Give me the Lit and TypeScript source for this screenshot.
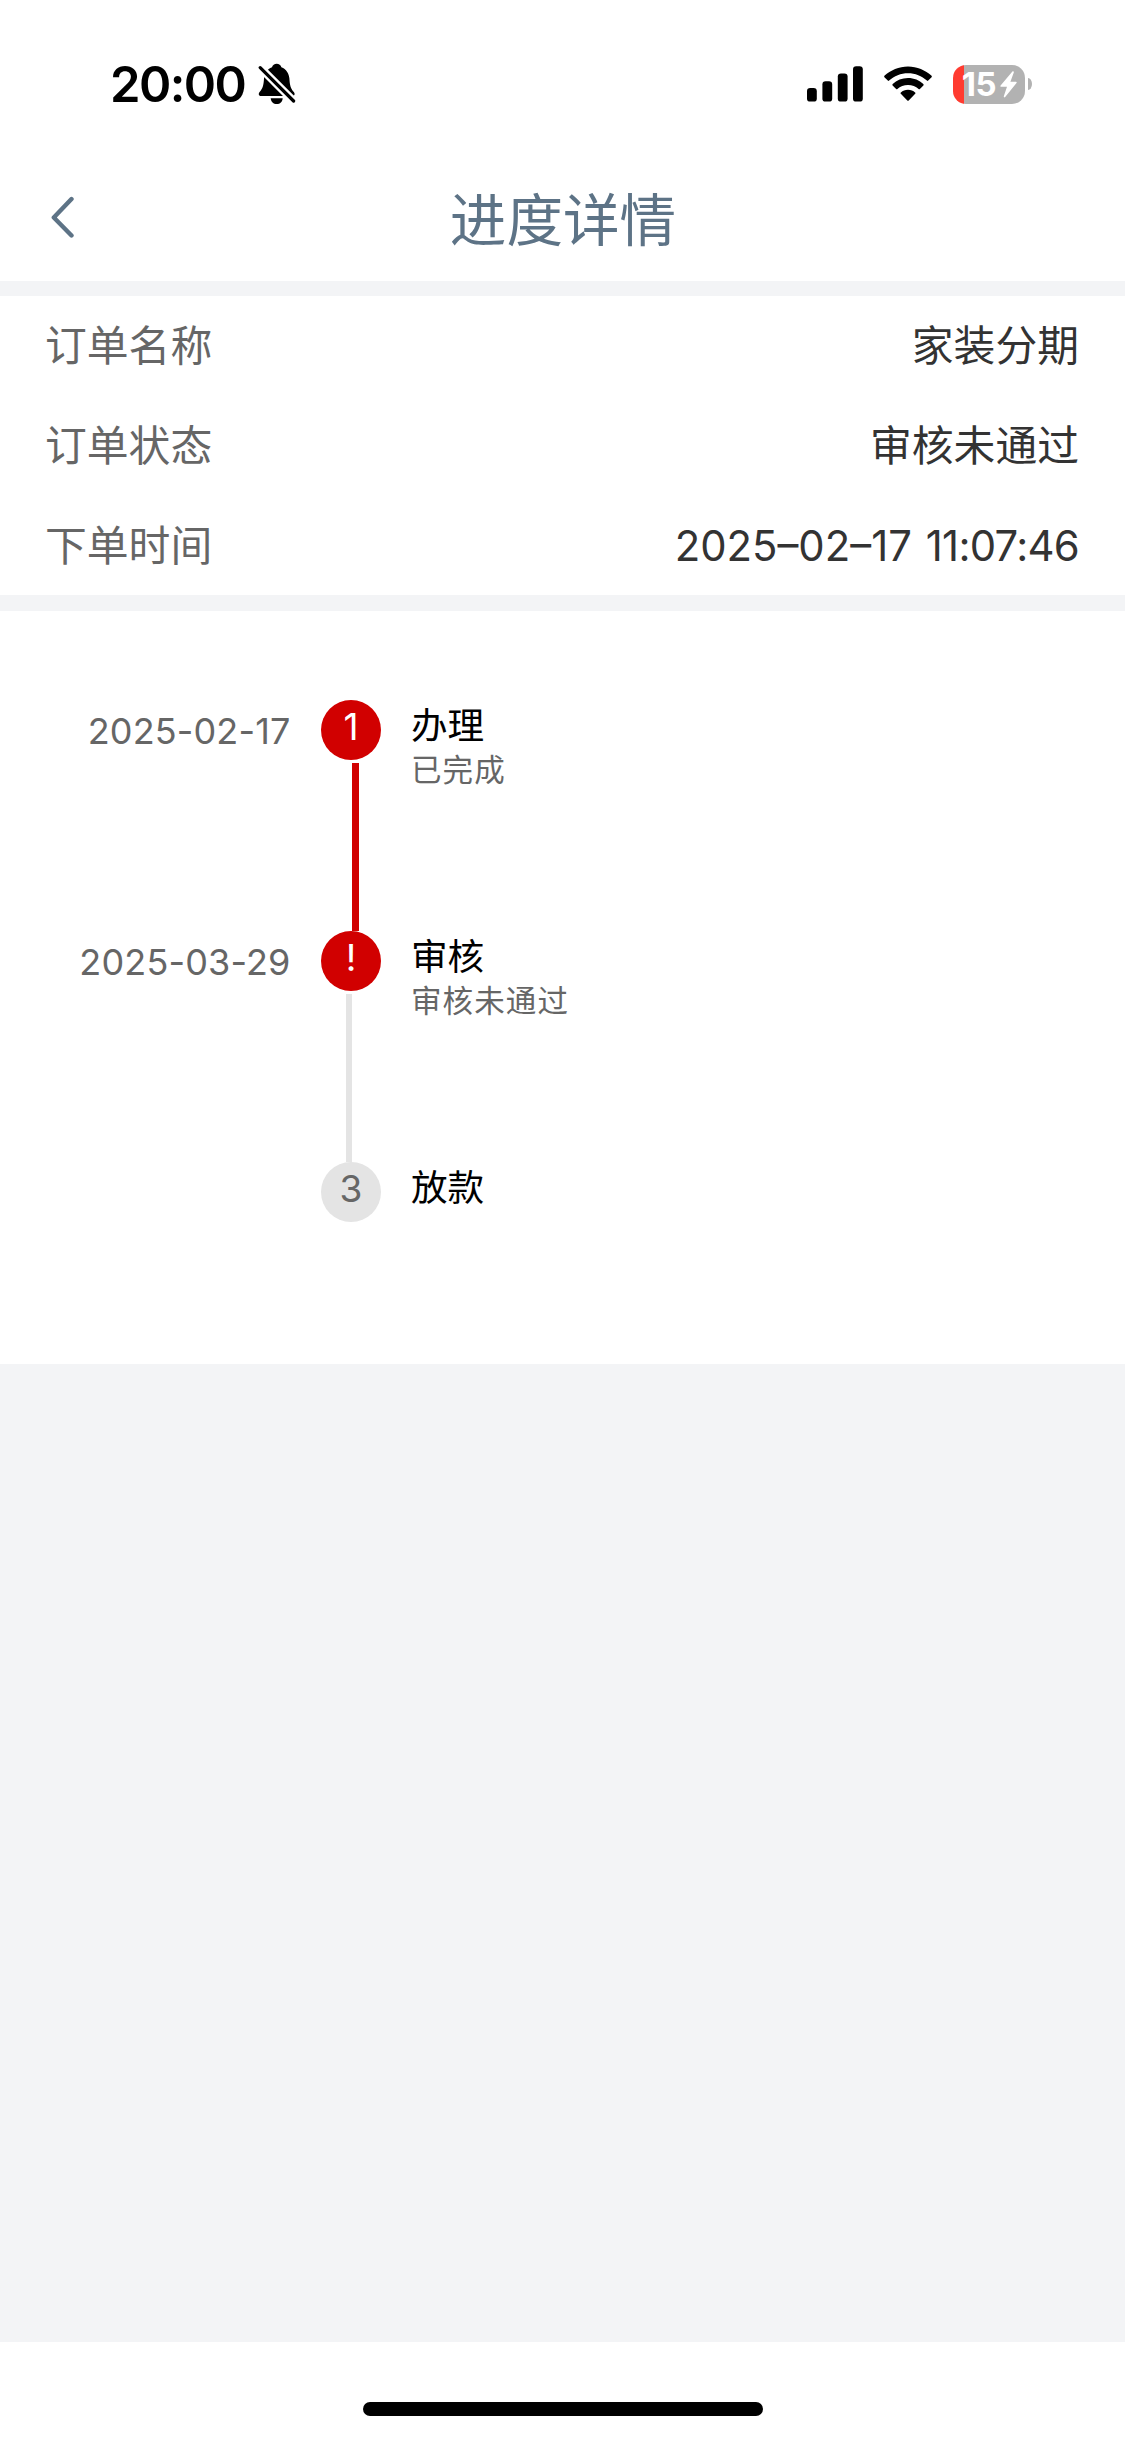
import { LitElement, html, css, svg, nothing } from "lit";
import { customElement, property } from "lit/decorators.js";

interface Step {
  date: string;
  mark: string;
  name: string;
  note: string;
  state: "done" | "error" | "wait";
}

const STEPS: Step[] = [
  { date: "2025-02-17", mark: "1", name: "办理", note: "已完成", state: "done" },
  { date: "2025-03-29", mark: "!", name: "审核", note: "审核未通过", state: "error" },
  { date: "", mark: "3", name: "放款", note: "", state: "wait" },
];

const ROWS = [
  { label: "订单名称", value: ["家装分期"] },
  { label: "订单状态", value: ["审核未通过"] },
  { label: "下单时间", value: ["2025–02–17", "11:07:46"] },
];

@customElement("status-bar")
class StatusBar extends LitElement {
  static styles = css`
    :host { display: flex; align-items: center; height: 168px; padding: 0 93px 0 110px; box-sizing: border-box; }
    .time { padding-top: 1px; font: 600 49px/60px Inter, sans-serif; letter-spacing: -1.6px; }
    .bell { width: 40px; height: 42px; margin-left: 13px; }
    .spacer { flex: 1; }
    .signal { width: 56px; height: 36px; margin-right: 21px; }
    .wifi { width: 48px; height: 36px; margin-right: 21px; }
    .battery { display: flex; align-items: center; justify-content: center; gap: 4px; box-sizing: border-box;
      width: 72px; height: 39px; border-radius: 13px; padding-left: 1px;
      background: linear-gradient(90deg, #ff3b30 11px, #b2b2b2 11px);
      color: #fff; font: 700 33px/39px Inter, sans-serif; letter-spacing: -0.4px; }
    .bolt { width: 17px; height: 27px; }
    .nub { width: 4px; height: 12px; margin-left: 3px; border-radius: 0 4px 4px 0 / 0 6px 6px 0; background: #b2b2b2; }
    .icon { display: block; flex: none; }
  `;

  render() {
    return html`
      <span class="time">20:00</span>
      <svg class="icon bell" viewBox="0 0 40 42">
        <mask id="cut">
          <rect width="40" height="42" fill="#fff" />
          <path d="M-2 0.4 L40 42.4" stroke="#000" stroke-width="8" />
        </mask>
        <g mask="url(#cut)">
          <path d="M18.7 0.8 C21 0.8 22.8 2.2 23.4 4.2 C28.2 6 31 10.4 31.4 15.6 C31.8 22.4 32.6 25.6 35.8 29 C37.4 30.8 36.6 33 34.2 33 H3.2 C0.8 33 0 30.8 1.6 29 C4.8 25.6 5.6 22.4 6 15.6 C6.4 10.4 9.2 6 14 4.2 C14.6 2.2 16.4 0.8 18.7 0.8Z" />
        </g>
        <path d="M12.7 35.2 H24.7 C24.4 38.9 22 41 18.7 41 C15.4 41 13 38.9 12.7 35.2Z" />
        <path d="M2.2 4.6 L35.6 38" fill="none" stroke="#000" stroke-width="3.2" stroke-linecap="round" />
      </svg>
      <span class="spacer"></span>
      <svg class="icon signal" viewBox="0 0 56 36">
        ${[[0, 22], [15.4, 15.2], [30.8, 7.4], [46, 0.2]].map(
          ([x, y]) => svg`<rect x=${x} y=${y} width="9.8" height=${35.6 - y} rx="3.2" />`
        )}
      </svg>
      <svg class="icon wifi" viewBox="0 0 48 36">
        <path d="M24 0.4 C33 0.4 41.5 4 47.6 9.8 C48 10.2 48 10.8 47.6 11.2 L44.2 14.6 C43.8 15 43.3 15 42.9 14.6 C37.8 9.9 31.2 7.3 24 7.3 C16.8 7.3 10.2 9.9 5.1 14.6 C4.7 15 4.2 15 3.8 14.6 L0.4 11.2 C0 10.8 0 10.2 0.4 9.8 C6.5 4 15 0.4 24 0.4Z" />
        <path d="M24 12 C30 12 35.3 14.3 39.3 18 C39.8 18.5 39.8 19 39.4 19.4 L35.9 22.9 C35.5 23.3 35 23.3 34.6 22.9 C31.8 20.4 28.1 18.9 24 18.9 C19.9 18.9 16.2 20.4 13.4 22.9 C13 23.3 12.5 23.3 12.1 22.9 L8.6 19.4 C8.2 19 8.2 18.5 8.7 18 C12.7 14.3 18 12 24 12Z" />
        <path d="M24 23.8 C26.8 23.8 29.3 24.8 31.1 26.4 C31.6 26.8 31.6 27.4 31.2 27.8 L24.7 34.4 C24.3 34.8 23.7 34.8 23.3 34.4 L16.8 27.8 C16.4 27.4 16.4 26.8 16.9 26.4 C18.7 24.8 21.2 23.8 24 23.8Z" />
      </svg>
      <div class="battery">
        <span>15</span>
        <svg class="icon bolt" viewBox="0 0 17 27">
          <path d="M12.4 0.6 L0.6 14.6 C0.2 15.2 0.5 15.8 1.2 15.8 H7 L3.8 25.2 C3.5 26.3 4.5 26.8 5.2 26 L16.5 12 C17 11.4 16.6 10.8 16 10.8 H10.4 L13.8 1.5 C14.1 0.3 13.1 -0.2 12.4 0.6Z" fill="#fff" />
        </svg>
      </div>
      <span class="nub"></span>
    `;
  }
}

@customElement("progress-step")
class ProgressStep extends LitElement {
  @property({ attribute: false }) step!: Step;

  static styles = css`
    :host { display: grid; grid-template-columns: 321px 60px 1fr; height: 231px; }
    .date { padding-right: 30.5px; text-align: right; font-size: 36px; line-height: 63px; letter-spacing: 0.15px; color: #666; }
    .rail { display: flex; flex-direction: column; align-items: center; }
    .dot { width: 60px; height: 60px; border-radius: 50%; text-align: center; font-size: 37px; line-height: 54px; }
    .done .dot, .error .dot { background: #d10000; color: #fff; }
    .wait .dot { background: #e4e4e4; color: #666; }
    .line { width: 6px; height: 168px; margin: 3px 4px 0 0; background: #e4e4e4; }
    .done .line { width: 7px; margin: 3px 0 0 9px; background: #d10000; }
    .body { padding-left: 30px; }
    .name { font-size: 36.6px; line-height: 52px; color: #000; }
    .note { margin-top: -2px; font-size: 30.5px; line-height: 40px; letter-spacing: 1.1px; color: #666; }
  `;

  render() {
    const { date, mark, name, note, state } = this.step;
    return html`
      <div class="date">${date}</div>
      <div class="rail ${state}">
        <div class="dot">${mark}</div>
        ${state === "wait" ? nothing : html`<div class="line"></div>`}
      </div>
      <div class="body">
        <div class="name">${name}</div>
        <div class="note">${note}</div>
      </div>
    `;
  }
}

@customElement("app-root")
class AppRoot extends LitElement {
  static styles = css`
    :host { display: flex; flex-direction: column; height: 2439px; background: #f3f4f6;
      font-family: Inter, "Noto Sans CJK SC", sans-serif; font-weight: 400; }
    .top { height: 281px; background: #fff; }
    .nav { display: grid; grid-template-columns: 113px 1fr 112px; align-items: center; height: 102px; }
    .back { width: 24px; height: 44px; margin: 0 0 5px 50px; }
    .title { padding-top: 3px; text-align: center; font-size: 56.6px; line-height: 100px; color: #5d7386; }
    .info { height: 299px; margin-top: 15px; background: #fff; }
    .row { display: flex; justify-content: space-between; padding: 0 46px 0 45px; height: 100px; font-size: 41.8px; line-height: 100.5px; }
    .label { color: #666; }
    .value { display: flex; gap: 14px; color: #333; }
    .value :nth-child(2) { letter-spacing: -0.7px; }
    .steps { box-sizing: border-box; height: 753px; margin-top: 16px; padding-top: 89px; background: #fff; }
    .foot { display: flex; justify-content: center; align-items: flex-start; box-sizing: border-box; height: 97px; margin-top: auto; padding-top: 60px; background: #fff; }
    .home { width: 400px; height: 14px; border-radius: 7px; background: #000; }
  `;

  render() {
    return html`
      <header class="top">
        <status-bar></status-bar>
        <nav class="nav">
          <svg class="back" viewBox="0 0 24 44" fill="none" stroke="#5d7386" stroke-width="4.4" stroke-linecap="round" stroke-linejoin="round">
            <path d="M21.5 4 L3.8 22.5 L21.5 40.5" />
          </svg>
          <span class="title">进度详情</span>
        </nav>
      </header>
      <section class="info">
        ${ROWS.map(({ label, value }) => html`
          <div class="row">
            <span class="label">${label}</span>
            <span class="value">${value.map((part) => html`<span>${part}</span>`)}</span>
          </div>
        `)}
      </section>
      <section class="steps">
        ${STEPS.map((step) => html`<progress-step .step=${step}></progress-step>`)}
      </section>
      <footer class="foot"><div class="home"></div></footer>
    `;
  }
}
